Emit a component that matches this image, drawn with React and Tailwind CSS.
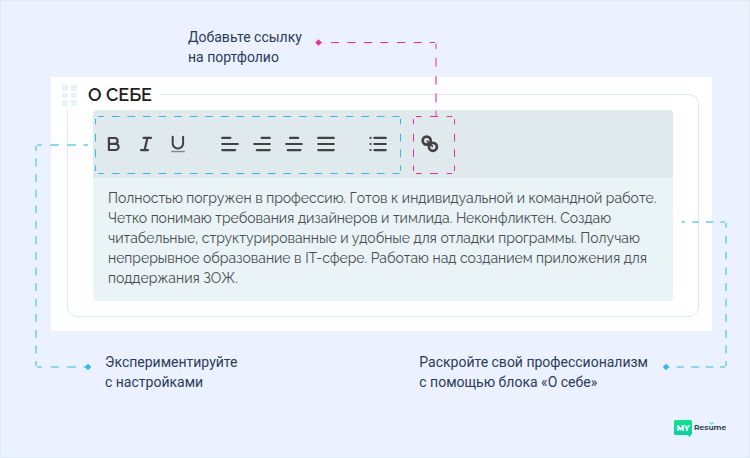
const ABOUT_LINES = [
  "Полностью погружен в профессию. Готов к индивидуальной и командной работе.",
  "Четко понимаю требования дизайнеров и тимлида. Неконфликтен. Создаю",
  "читабельные, структурированные и удобные для отладки программы. Получаю",
  "непрерывное образование в IT-сфере. Работаю над созданием приложения для",
  "поддержания ЗОЖ.",
];

function Icon({ children, className = "" }) {
  return (
    <svg
      viewBox="0 0 20 20"
      className={`h-5 w-5 shrink-0 ${className}`}
      fill="none"
      stroke="#424242"
      strokeWidth="2.1"
      strokeLinecap="round"
      strokeLinejoin="round"
    >
      {children}
    </svg>
  );
}

function Toolbar() {
  return (
    <div className="flex h-[68px] items-center gap-3 rounded-t bg-[#e0e9eb] pl-[11px]">
      <Icon>
        <path d="M4.9 4v12h6.6a3.1 3.1 0 0 0 0-6.2H4.9M4.9 4h5.8a2.9 2.9 0 0 1 0 5.8" strokeWidth="2.2" />
      </Icon>
      <Icon>
        <path d="M7.6 3.9h7.4M5 16.1h7M11.4 3.9 8.6 16.1" strokeWidth="2.2" />
      </Icon>
      <Icon>
        <path d="M4.7 2.8v6.6a5 5 0 0 0 10.4 0V2.8" strokeWidth="2" />
        <path d="M3.2 17.5h13.6" stroke="#858a8b" strokeWidth="1.5" strokeLinecap="butt" />
      </Icon>
      <Icon className="ml-5">
        <path d="M2.2 3.9h8.2M2.2 10h15.6M2.2 16.1h13" />
      </Icon>
      <Icon>
        <path d="M9.6 3.9h8.2M2.2 10h15.6M4.8 16.1h13" />
      </Icon>
      <Icon>
        <path d="M6 3.9h8.2M2.2 10h15.6M3.7 16.1h12.8" />
      </Icon>
      <Icon>
        <path d="M2.2 3.9h15.6M2.2 10h15.6M2.2 16.1h15.6" />
      </Icon>
      <Icon className="ml-5">
        <path d="M6.4 3.9h11.4M6.4 10h11.4M6.4 16.1h11.4M2.5 3.9h.1M2.5 10h.1M2.5 16.1h.1" />
      </Icon>
      <Icon className="ml-5">
        <g strokeWidth="2.7">
          <circle cx="6.7" cy="6.6" r="4" />
          <circle cx="12.9" cy="12.8" r="4" />
          <path d="m7.2 7.1 5.2 5.2" strokeWidth="1.7" />
        </g>
      </Icon>
    </div>
  );
}

// Horizontal dash segments at a fixed y
const h = (y, segments) => segments.map(([a, b]) => `M${a} ${y}H${b}`).join("");
// Vertical dash segments at a fixed x
const v = (x, segments) => segments.map(([a, b]) => `M${x} ${a}V${b}`).join("");

const BOX_SIDE = [[119, 124.4], [133.8, 141.6], [149.4, 157.2], [165.5, 171]];
const PINK_TOP = [[416, 421.7], [430, 438], [446.6, 452.3]];
const SIDE_LOWER = [[283, 291], [298.7, 306.6], [314, 322], [330, 338], [345.3, 353.3], [361, 366]];

function Connectors() {
  return (
    <svg className="pointer-events-none absolute -top-px -left-px h-[458px] w-[750px]" fill="none">
      <g stroke="#27bdf0">
        <path d="M98 116.5H399.5M98 173.5H399.5" strokeDasharray="7.8 7.8" strokeDashoffset="1.9" />
        <path d={v(95.5, BOX_SIDE) + v(400.5, BOX_SIDE)} />
      </g>
      <path
        stroke="#f02ba0"
        d={h(116.5, PINK_TOP) + h(173.5, PINK_TOP) + v(413.5, BOX_SIDE) + v(454.5, BOX_SIDE)}
      />
      <path
        stroke="#f02ba0"
        d={h(42.5, [[319, 322], [331, 339], [347.3, 355.7], [364, 372.3], [380.3, 388.4], [397, 405.3], [413.7, 421.7], [429.7, 435]])}
      />
      <path
        stroke="#f28bcb"
        strokeWidth="2"
        d={v(436, [[43.5, 49], [57.7, 66.7], [75.7, 84.7], [93.3, 102.6], [110.7, 116]])}
      />
      <g stroke="#87daf7" strokeWidth="2">
        <path d={h(145, [[37, 42], [50, 59], [67, 76], [83.5, 88]])} />
        <path
          d={v(36, [[146, 151], [158.5, 166.5], [174, 182], [189.7, 197.7], [205.2, 213.2], [220.8, 228.8], [236.3, 244.3], [251.9, 259.9], [267.5, 275.5], ...SIDE_LOWER])}
        />
        <path d={h(367, [[37, 42], [51, 59], [67.3, 76], [83.5, 88]])} />
        <path d={h(222, [[681.5, 685], [692.3, 698.7], [706, 713.7], [720.3, 725]])} />
        <path d={v(726, [[223, 227.7], [235.7, 243.4], [251.6, 259.3], [267.3, 275], ...SIDE_LOWER])} />
        <path d={h(367, [[666, 669.5], [676.7, 684], [691.3, 699.3], [705.7, 713.3], [720, 725]])} />
      </g>
      <path fill="#f02ba0" d="m318.5 39.3 3.2 3.2-3.2 3.2-3.2-3.2z" />
      <path fill="#27bdf0" d="m88 363.8 3.2 3.2-3.2 3.2-3.2-3.2zM666 363.8l3.2 3.2-3.2 3.2-3.2-3.2z" />
    </svg>
  );
}

function Logo() {
  return (
    <div className="flex items-start gap-[2px] font-['Montserrat','Inter',sans-serif] leading-none">
      <div className="relative flex h-[15px] w-[18px] items-center justify-center rounded-[1.5px] bg-linear-to-b from-[#0ae688] to-[#0bcfa8]">
        <span className="text-[8px] font-extrabold text-white">MY</span>
        <svg viewBox="0 0 5 3" className="absolute top-[14px] left-[12px] h-[3px] w-[5px]">
          <path d="M0 0h5L4 3z" fill="#0bcfa8" />
        </svg>
      </div>
      <div className="relative pt-[4px] text-[7.6px] font-bold text-[#33485c]">
        Resume
        <svg viewBox="0 0 5 3" className="absolute top-[2px] left-[15px] h-[3px] w-[5px]">
          <path d="m.5.5 2 1.5 2-1.5" fill="none" stroke="#0cd6a0" />
        </svg>
      </div>
    </div>
  );
}

export default function App() {
  return (
    <div className="relative flex h-[458px] w-[750px] flex-col overflow-hidden border border-[#deebf0] bg-[#ebf1ff] font-['Roboto',sans-serif] text-sm leading-5 text-[#2a3b59]">
      <div className="h-[76px] pt-[26px] pl-[187px] whitespace-nowrap">
        <p>Добавьте ссылку</p>
        <p>на портфолио</p>
      </div>

      <section className="ml-[50px] h-[254px] w-[661px] bg-white pt-[17px] pl-4">
        <div className="h-[223px] w-[632px] rounded-[10px] border border-[#dee9eb]">
          <div className="-mt-[10px] -ml-[8px] flex h-[25px] w-[100px] bg-white pl-[2px]">
            <div className="grid h-fit grid-cols-[6px_6px] gap-x-[3px] gap-y-[2px]">
              {[0, 1, 2, 3, 4, 5].map((i) => (
                <span key={i} className="h-[5.5px] w-[6px] rounded-[1px] bg-[#e6f2f4]" />
              ))}
            </div>
            <h1 className="ml-[11px] font-['Raleway','Inter',sans-serif] text-lg leading-5 font-semibold whitespace-nowrap text-[#1d2128]">
              О СЕБЕ
            </h1>
          </div>
          <div className="ml-[25px] h-[191px] w-[580px] rounded bg-[#eaf3f6]">
            <Toolbar />
            <div className="pt-[10px] pl-[15px] font-['Raleway','Open_Sans',sans-serif] text-sm leading-5 font-normal tracking-[-0.01px] whitespace-nowrap text-[#454d50]">
              {ABOUT_LINES.map((line) => (
                <p key={line}>{line}</p>
              ))}
            </div>
          </div>
        </div>
      </section>

      <div className="flex justify-between pt-[21px] pr-[101px] pl-[104px] whitespace-nowrap">
        <div>
          <p>Экспериментируйте</p>
          <p>с настройками</p>
        </div>
        <div>
          <p>Раскройте свой профессионализм</p>
          <p>с помощью блока «О себе»</p>
        </div>
      </div>

      <div className="mt-[28px] ml-[673px]">
        <Logo />
      </div>

      <Connectors />
    </div>
  );
}
